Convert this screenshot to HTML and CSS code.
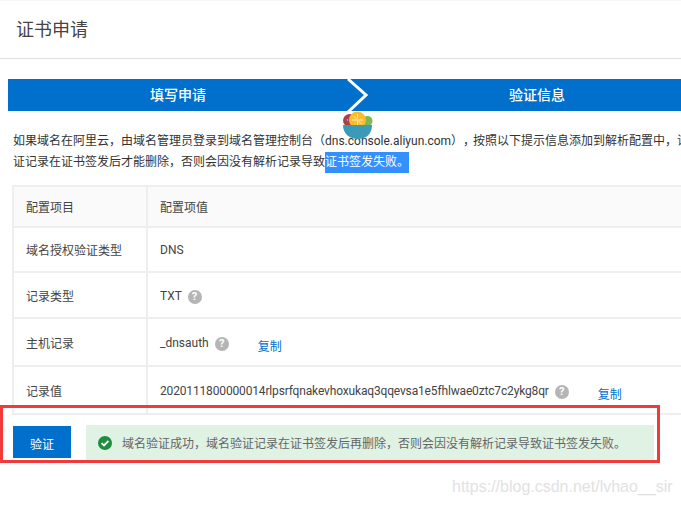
FILE: index.html
```html
<!DOCTYPE html>
<html lang="zh-CN">
<head>
    <meta charset="UTF-8">
    <title>证书申请</title>
    <link rel="stylesheet" href="styles.css">
</head>
<body>
    <div class="page-header">证书申请</div>

    <div class="steps">
        <div class="step step-first">填写申请</div>
        <div class="step step-second">验证信息</div>
        <svg class="step-arrow" width="24" height="34" viewBox="0 0 24 34">
            <polyline points="1,0 19,16 1,33" fill="none" stroke="#fff" stroke-width="3"/>
        </svg>
        <svg class="bowl" width="30" height="30" viewBox="0 0 30 30">
            <circle cx="6.5" cy="9.5" r="6.5" fill="#a8414a"/>
            <circle cx="24.5" cy="10" r="5" fill="#7fb84e"/>
            <circle cx="14.5" cy="9" r="8.5" fill="#fbbd30"/>
            <path d="M14.5 3 L14.5 14 M9 9 L20 9 M10.5 5 L18.5 13" stroke="#fde9a8" stroke-width="1"/>
            <circle cx="4.5" cy="9" r="0.8" fill="#e6b7b7"/>
            <path d="M0 14 L29 14 C29 23 23 28 15 28 C7 28 0 23 0 14 Z" fill="#3a9bb8"/>
        </svg>
    </div>

    <div class="intro">
        <p>如果域名在阿里云，由域名管理员登录到域名管理控制台（dns.console.aliyun.com<span class="full-punct">），</span>按照以下提示信息添加到解析配置中，请</p>
        <p>证记录在证书签发后才能删除，否则会因没有解析记录导致<span class="selected">证书签发失败。</span></p>
    </div>

    <table class="config-table">
        <tr class="row-head">
            <th>配置项目</th>
            <th>配置项值</th>
        </tr>
        <tr class="row-type">
            <td>域名授权验证类型</td>
            <td>DNS</td>
        </tr>
        <tr class="row-record">
            <td>记录类型</td>
            <td>TXT <span class="help">?</span></td>
        </tr>
        <tr class="row-host">
            <td>主机记录</td>
            <td>_dnsauth <span class="help">?</span><a class="copy">复制</a></td>
        </tr>
        <tr class="row-value">
            <td>记录值</td>
            <td><span class="record-value">2020111800000014rlpsrfqnakevhoxukaq3qqevsa1e5fhlwae0ztc7c2ykg8qr</span> <span class="help">?</span><a class="copy">复制</a></td>
        </tr>
    </table>

    <div class="verify-bar">
        <button class="verify-btn">验证</button>
        <div class="alert-success">
            <svg width="14" height="14" viewBox="0 0 14 14">
                <circle cx="7" cy="7" r="7" fill="#1e8e3e"/>
                <polyline points="3.6,7.2 6,9.4 10.4,5" fill="none" stroke="#fff" stroke-width="1.8"/>
            </svg>
            <span>域名验证成功，域名验证记录在证书签发后再删除，否则会因没有解析记录导致证书签发失败。</span>
        </div>
    </div>

    <div class="red-frame"></div>
    <div class="watermark">https://blog.csdn.net/lvhao__sir</div>
</body>
</html>
```

FILE: styles.css
```css
html, body {
    height: 507px;
    overflow: hidden;
}
body {
    position: relative;
    margin: 0;
    background: #fff;
    color: #333;
    font-family: Roboto, "Noto Sans CJK SC", sans-serif;
    font-size: 12px;
}
.page-header {
    height: 59px;
    box-sizing: border-box;
    padding-left: 16px;
    line-height: 58px;
    font-size: 18px;
    color: #444;
    border-bottom: 1px solid #e0e0e0;
    border-top: 1px solid #f6f6f6;
}
.steps {
    position: relative;
    display: flex;
    margin: 20px 0 0 8px;
    height: 32px;
    background: #0070cc;
    color: #fff;
    font-size: 14px;
    font-weight: 500;
    line-height: 32px;
}
.step {
    flex-shrink: 0;
    text-align: center;
}
.step-first {
    width: 340px;
}
.step-second {
    width: 378px;
}
.step-arrow {
    position: absolute;
    left: 339px;
    top: 0;
}
.bowl {
    position: absolute;
    left: 335px;
    top: 32px;
}
.intro {
    margin: 20px 0 0 13px;
    white-space: nowrap;
    line-height: 21px;
    color: #333;
}
.intro p {
    margin: 0;
}
.full-punct {
    text-spacing-trim: space-all;
    margin-right: -2px;
}
.selected {
    display: inline-block;
    background: #3390ff;
    color: #fff;
}
.config-table {
    margin: 12px 0 0 12px;
    width: 800px;
    border-collapse: collapse;
    table-layout: fixed;
}
.config-table th,
.config-table td {
    border: 2px solid #eee;
    padding: 0 0 0 12px;
    text-align: left;
    font-weight: normal;
    color: #444;
    white-space: nowrap;
}
.config-table th:first-child,
.config-table td:first-child {
    width: 120px;
}
.config-table th {
    background: #fafafa;
}
.row-head {
    height: 41px;
}
.row-type {
    height: 45px;
}
.row-record {
    height: 46px;
}
.row-record td:last-child {
    padding-top: 3px;
}
.row-host {
    height: 48px;
}
.row-value {
    height: 48px;
}
.record-value {
    letter-spacing: -0.156px;
}
.help {
    display: inline-block;
    width: 14px;
    height: 14px;
    margin-left: 3px;
    border-radius: 50%;
    background: #b5b5b5;
    color: #fff;
    font-size: 11px;
    font-weight: bold;
    line-height: 14px;
    text-align: center;
}
.copy {
    position: relative;
    top: 4px;
    margin-left: 29px;
    color: #0070cc;
}
.verify-bar {
    position: absolute;
    left: 13px;
    top: 425px;
    display: flex;
    align-items: flex-start;
    gap: 15px;
    background: #fff;
    padding-right: 5px;
}
.verify-btn {
    width: 58px;
    height: 32px;
    margin-top: 1px;
    border: none;
    background: #0070cc;
    color: #fff;
    font-family: inherit;
    font-size: 12px;
    padding: 2px 0 0;
}
.alert-success {
    display: flex;
    align-items: center;
    gap: 10px;
    width: 556px;
    height: 35px;
    padding-left: 12px;
    background: #e0f2e4;
    color: #666;
    white-space: nowrap;
}
.red-frame {
    position: absolute;
    left: 0;
    top: 405px;
    width: 654px;
    height: 52px;
    border: 3px solid #f33a3a;
}
.watermark {
    position: absolute;
    left: 452px;
    top: 478px;
    color: #e2e2e2;
    font-family: "Liberation Sans", sans-serif;
    font-size: 16px;
    white-space: nowrap;
}
```
